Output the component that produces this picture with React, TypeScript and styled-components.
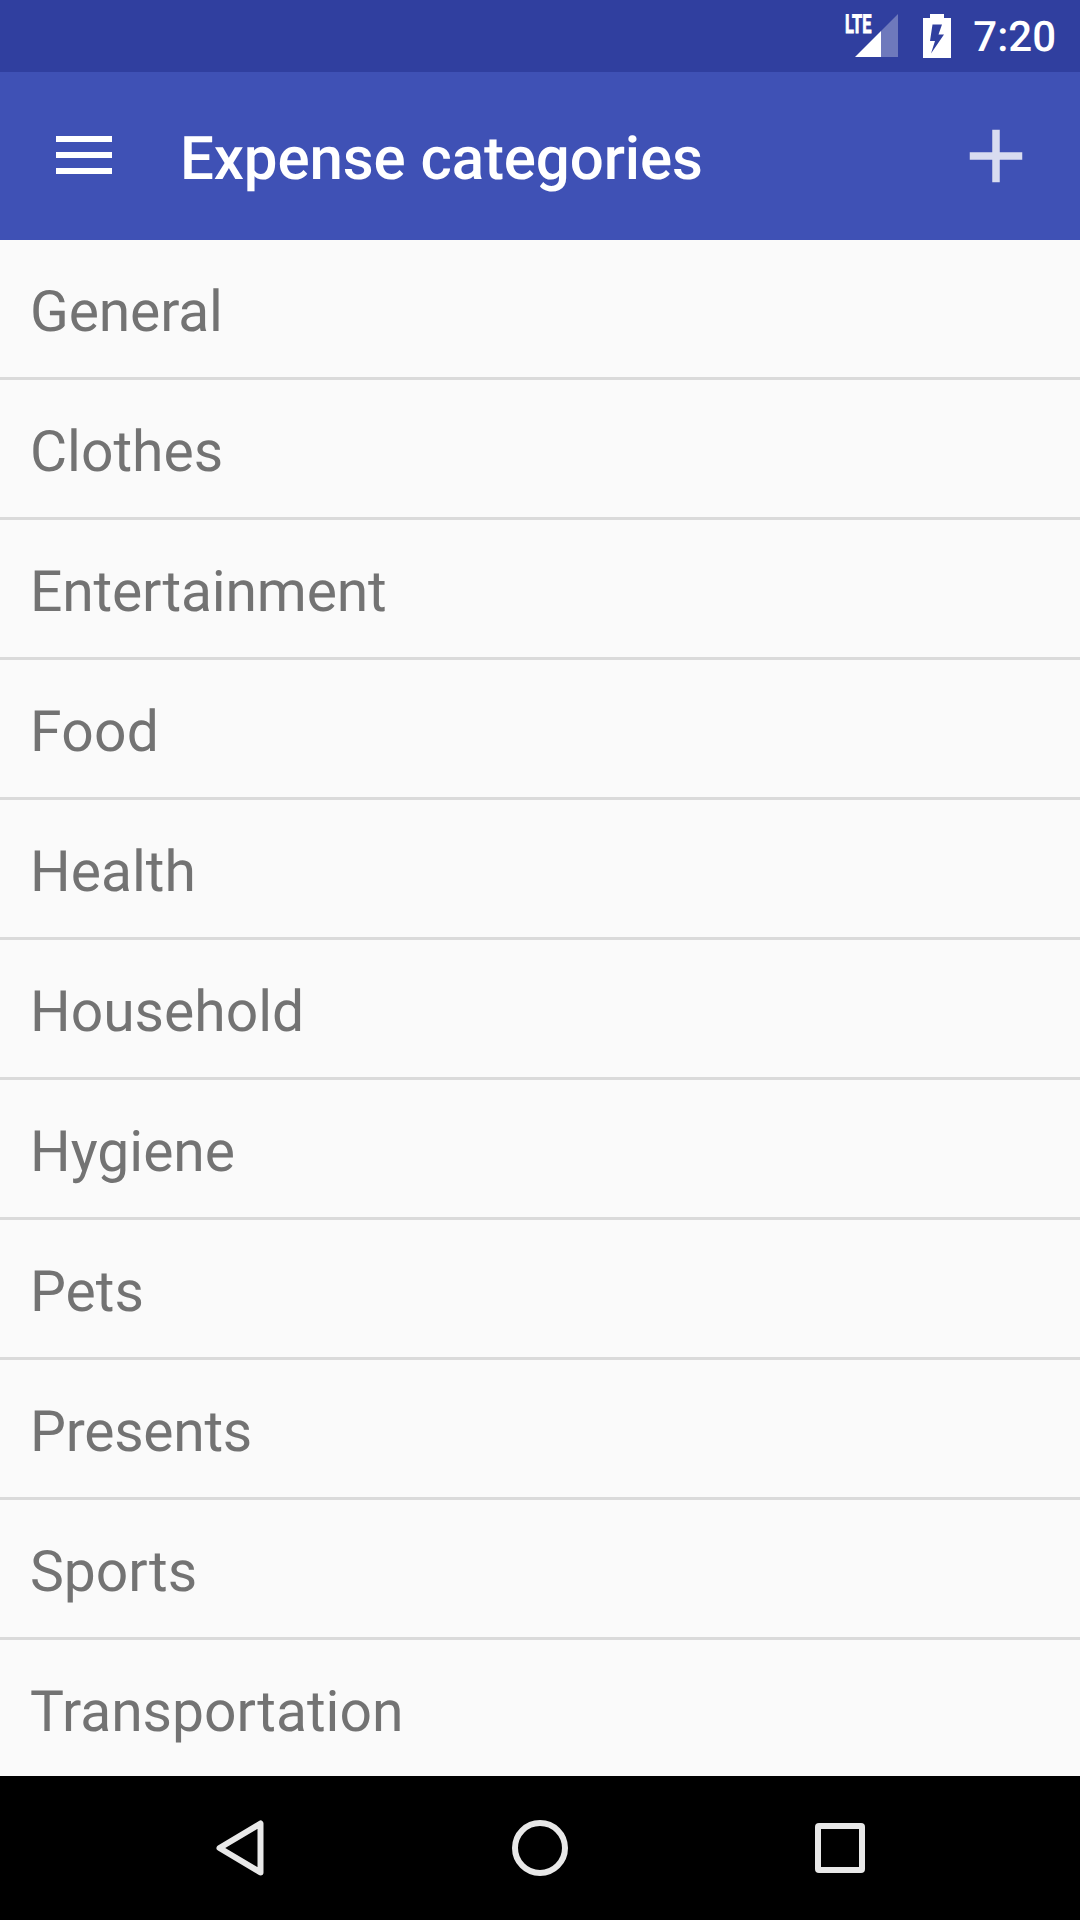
import React from "react";
import styled, { createGlobalStyle } from "styled-components";

const GlobalStyle = createGlobalStyle`
  * { box-sizing: border-box; }
  body { margin: 0; background: #fafafa; font-family: Roboto, "Noto Sans", sans-serif; text-rendering: geometricPrecision; }
  svg { display: block; }
`;
const Screen = styled.div`
  width: 1080px; height: 1920px; display: flex; flex-direction: column; overflow: hidden; background: #fafafa;
`;
const StatusBar = styled.header`
  height: 72px; flex: none; display: flex; align-items: center; justify-content: flex-end;
  padding-right: 24px; background: #303f9f; color: #fff;
`;
const Network = styled.div`
  display: flex; align-items: flex-start; height: 72px;
`;
const NetworkLabel = styled.span`
  width: 28px; margin-right: -18px; padding-top: 12px;
  font-size: 26px; font-weight: 700; line-height: 26px; white-space: nowrap;
  -webkit-text-stroke: 0.9px #fff;
  transform: scaleX(.63); transform-origin: left top;
`;
const Clock = styled.time`
  font-size: 42px; font-weight: 500; line-height: 72px; margin-left: 22px; padding-top: 4px;
`;
const Battery = styled.svg`
  margin-left: 25px;
`;
const Toolbar = styled.div`
  height: 168px; flex: none; display: flex; align-items: center; background: #3f51b5; color: #fff;
`;
const IconButton = styled.button`
  width: 168px; height: 168px; padding: 0; border: 0; background: none; color: inherit;
  display: flex; align-items: center; justify-content: center;
`;
const MenuButton = styled(IconButton)`
  padding-bottom: 2px;
`;
const Title = styled.h1`
  flex: 1; margin: 0; padding: 6px 0 0 12px; font-size: 60px; font-weight: 500; line-height: 70px;
  letter-spacing: -0.1px;
`;
const List = styled.ul`
  flex: 1; min-height: 0; margin: 0; padding: 0; list-style: none; overflow: hidden;
`;
const Item = styled.li<{ $tracking?: number }>`
  height: 140px; padding: 0 30px; border-bottom: 3px solid #dadada;
  font-size: 57px; line-height: 144px; color: #737373;
  letter-spacing: ${({ $tracking = 0 }) => $tracking}px;
`;
const NavBar = styled.nav`
  height: 144px; flex: none; display: flex; justify-content: center; align-items: center; background: #000;
`;
const NavButton = styled(IconButton)`
  width: 300px; height: 144px;
`;

const categories: { name: string; tracking?: number }[] = [
  { name: "General", tracking: -0.15 },
  { name: "Clothes" },
  { name: "Entertainment", tracking: -0.18 },
  { name: "Food", tracking: 0.3 },
  { name: "Health" },
  { name: "Household" },
  { name: "Hygiene" },
  { name: "Pets" },
  { name: "Presents", tracking: -0.28 },
  { name: "Sports" },
  { name: "Transportation" },
];

export default function App() {
  return (
    <Screen>
      <GlobalStyle />
      <StatusBar>
        <Network>
          <NetworkLabel>LTE</NetworkLabel>
          <svg width="43" height="72" viewBox="855 0 43 72" fill="#fff">
            <path d="M898 14v43h-17V31z" opacity=".3" />
            <path d="M881 31v26h-26z" />
          </svg>
        </Network>
        <Battery width="28" height="44" viewBox="0 0 28 44">
          <path fill="#fff" fillRule="evenodd" d="M7 0h14v4h7v40H0V4h7zM9.5 10.5L7 27h5L8 39.5 21 20.5h-5.5l3.5-10z" />
        </Battery>
        <Clock>7:20</Clock>
      </StatusBar>
      <Toolbar>
        <MenuButton aria-label="Menu">
          <svg width="56" height="38"><path d="M0 0h56v6H0zM0 16h56v6H0zM0 32h56v6H0z" fill="#fff" /></svg>
        </MenuButton>
        <Title>Expense categories</Title>
        <IconButton aria-label="Add category">
          <svg width="90" height="90" viewBox="0 0 24 24"><path d="M19 13h-6v6h-2v-6H5v-2h6V5h2v6h6z" fill="#fff" opacity=".8" /></svg>
        </IconButton>
      </Toolbar>
      <List>{categories.map(({ name, tracking }) => <Item key={name} $tracking={tracking}>{name}</Item>)}</List>
      <NavBar>
        <NavButton aria-label="Back"><svg width="48" height="56"><path d="M44.5 3.5v49L3.5 28z" fill="none" stroke="#e8e8e8" strokeWidth="6" strokeLinejoin="round" /></svg></NavButton>
        <NavButton aria-label="Home"><svg width="56" height="56"><circle cx="28" cy="28" r="25" fill="none" stroke="#e8e8e8" strokeWidth="6" /></svg></NavButton>
        <NavButton aria-label="Overview"><svg width="50" height="50"><rect width="50" height="50" rx="4" fill="#e8e8e8" /><path d="M6 6h38v38H6z" /></svg></NavButton>
      </NavBar>
    </Screen>
  );
}
